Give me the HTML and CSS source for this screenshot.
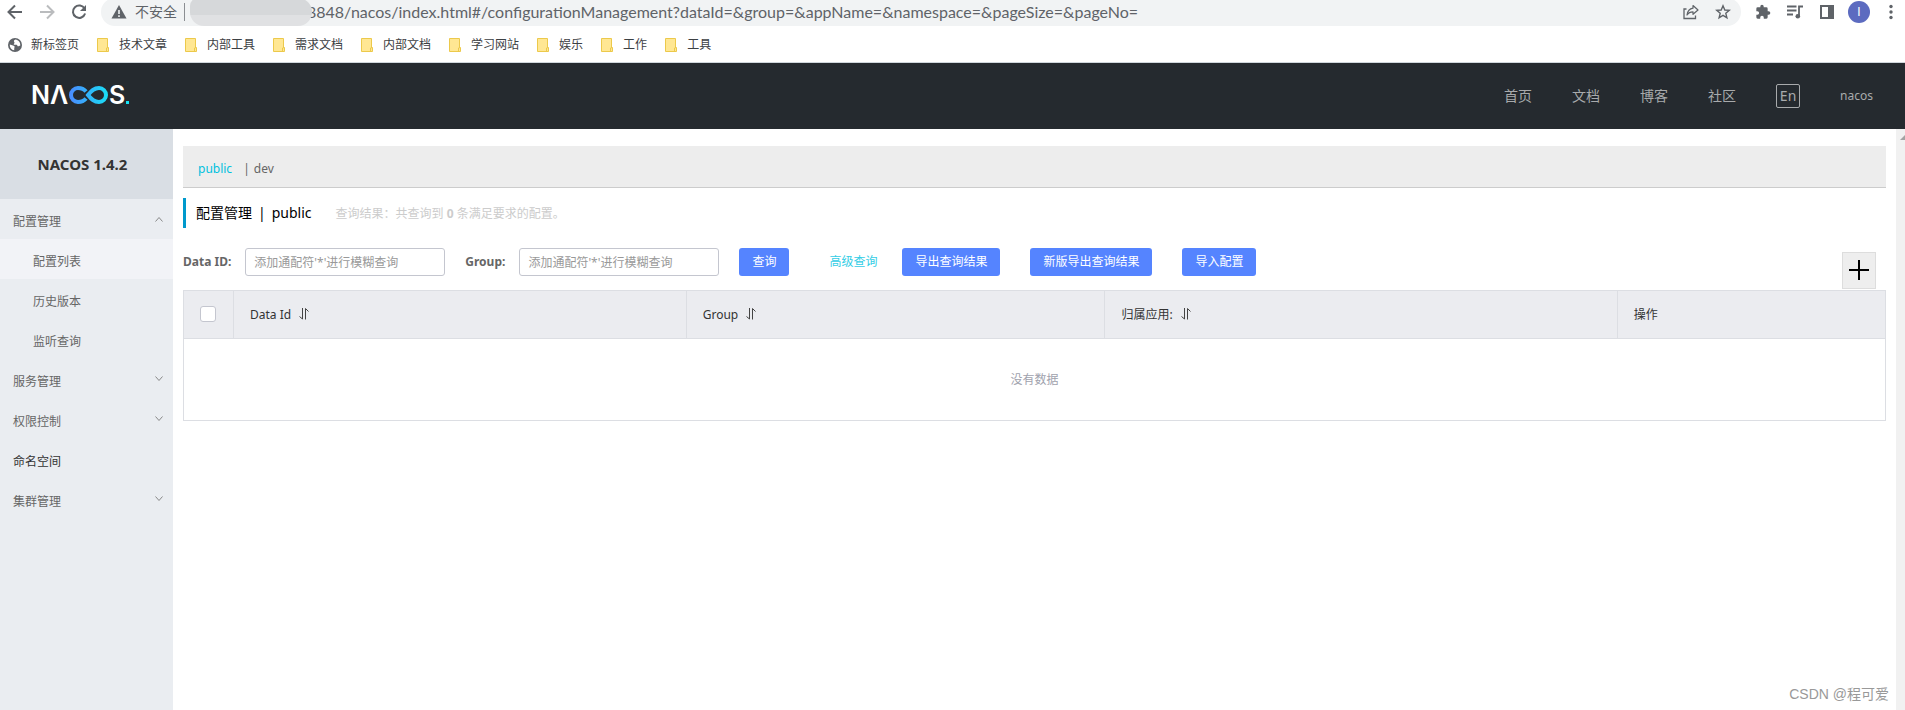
FILE: index.html
```
<!DOCTYPE html>
<html lang="zh-CN">
<head>
<meta charset="utf-8">
<title>Nacos</title>
<link rel="stylesheet" href="styles.css">
</head>
<body>

<!-- browser toolbar -->
<div class="toolbar">
  <div class="toolbar-nav">
    <button class="tool" aria-label="后退"><svg width="16" height="16" viewBox="0 0 16 16"><path d="M15 8H2M8 1.500L1.500 8L8 14.500" fill="none" stroke="#5f6368" stroke-width="2"/></svg></button>
    <button class="tool" aria-label="前进"><svg width="16" height="16" viewBox="0 0 16 16"><path d="M1 8H14M8 1.500L14.500 8L8 14.500" fill="none" stroke="#babcbe" stroke-width="2"/></svg></button>
    <button class="tool" aria-label="刷新"><svg width="16" height="16" viewBox="0 0 16 16"><path d="M13.600 4.700A6.200 6.200 0 1 0 14.100 9.500" fill="none" stroke="#5f6368" stroke-width="2"/><path d="M15 1V7H9z" fill="#5f6368"/></svg></button>
  </div>
  <div class="address">
    <svg width="16" height="14" viewBox="0 0 16 14"><path d="M8 0L15.500 13.500H.500z" fill="#5f6368"/><path d="M8 5V9M8 10.300V12" stroke="#f1f3f4" stroke-width="1.600"/></svg>
    <span class="insecure">不安全</span>
    <span class="smudge"></span>
    <span class="url">8848/nacos/index.html#/configurationManagement?dataId=&amp;group=&amp;appName=&amp;namespace=&amp;pageSize=&amp;pageNo=</span>
    <button class="tool" aria-label="分享"><svg width="16" height="16" viewBox="0 0 16 16"><path d="M3.500 5H1V14.500H12.500V11.500" fill="none" stroke="#5f6368" stroke-width="1.300"/><path d="M10 1.500L15 6L10 10.300V7.800C7.500 7.800 5.500 8.500 4 11C4.500 7.500 6.300 4.800 10 4.200z" fill="none" stroke="#5f6368" stroke-width="1.200" stroke-linejoin="round"/></svg></button>
    <button class="tool" aria-label="收藏"><svg width="16" height="16" viewBox="0 0 16 16"><path d="M8 1.800L9.800 6L14.300 6.300L10.800 9.300L11.900 13.800L8 11.400L4.100 13.800L5.200 9.300L1.700 6.300L6.200 6z" fill="none" stroke="#5f6368" stroke-width="1.400"/></svg></button>
  </div>
  <div class="toolbar-ext">
    <button class="tool" aria-label="扩展程序"><svg width="16" height="16" viewBox="0 0 24 24"><path d="M20.500 11H19V7a2 2 0 0 0-2-2h-4V3.500a2.500 2.500 0 0 0-5 0V5H4a2 2 0 0 0-2 2v3.800h1.500a2.700 2.700 0 0 1 0 5.400H2V20a2 2 0 0 0 2 2h3.800v-1.500a2.700 2.700 0 0 1 5.400 0V22H17a2 2 0 0 0 2-2v-4h1.500a2.500 2.500 0 0 0 0-5z" fill="#5f6368"/></svg></button>
    <button class="tool" aria-label="媒体"><svg width="16" height="16" viewBox="0 0 16 16"><path d="M0 2.500H9.500M0 6.500H9.500M0 10.500H6M12 12.500V2.500H16" fill="none" stroke="#5f6368" stroke-width="1.800"/><circle cx="10.800" cy="12.300" r="2.300" fill="#5f6368"/></svg></button>
    <button class="tool" aria-label="侧边栏"><svg width="16" height="16" viewBox="0 0 16 16"><path d="M1 1H15V15H1zM3 3V13H9V3z" fill="#5f6368" fill-rule="evenodd"/></svg></button>
    <button class="avatar">I</button>
    <button class="tool" aria-label="菜单"><svg width="16" height="16" viewBox="0 0 16 16"><g fill="#5f6368"><circle cx="8" cy="2.500" r="1.700"/><circle cx="8" cy="8" r="1.700"/><circle cx="8" cy="13.500" r="1.700"/></g></svg></button>
  </div>
</div>

<svg class="defs" width="0" height="0">
  <symbol id="folder" viewBox="0 0 12 14"><path d="M.500 .500H10.500V9.500H11.500V13.500H.500z" fill="#ffe793" stroke="#ecc94b"/><path d="M9.500 13.500V10L11 9.500" fill="none" stroke="#ecc94b"/></symbol>
  <symbol id="sort" viewBox="0 0 12 14"><path d="M4.500 1V12L1.500 9.500M7.500 12.500V1.500L10.500 4.500" fill="none" stroke="#444"/></symbol>
  <symbol id="arrow" viewBox="0 0 8 6"><path d="M.500 .500L4 4.500L7.500 .500" fill="none" stroke="#888"/></symbol>
</svg>

<nav class="bookmarks">
  <a class="newtab" href="#"><svg width="14" height="14" viewBox="0 0 14 14"><circle cx="7" cy="7" r="7" fill="#5f6368"/><path d="M7.500 1.600C6 2 5.500 3.300 6.300 4.200C7.300 5 5.500 5.500 5.800 6.700H8.500C9.800 7 9 8.500 10.500 8.300L12.300 7.500C12.500 4.500 10.500 2 7.500 1.600zM1.800 6.500L5 7.500C7 8 6.800 9 6.300 9.800L6.200 12.300C3.500 12 1.600 9.500 1.800 6.500z" fill="#fff"/></svg>新标签页</a>
  <a href="#"><svg width="12" height="14"><use href="#folder"/></svg>技术文章</a>
  <a href="#"><svg width="12" height="14"><use href="#folder"/></svg>内部工具</a>
  <a href="#"><svg width="12" height="14"><use href="#folder"/></svg>需求文档</a>
  <a href="#"><svg width="12" height="14"><use href="#folder"/></svg>内部文档</a>
  <a href="#"><svg width="12" height="14"><use href="#folder"/></svg>学习网站</a>
  <a href="#"><svg width="12" height="14"><use href="#folder"/></svg>娱乐</a>
  <a href="#"><svg width="12" height="14"><use href="#folder"/></svg>工作</a>
  <a href="#"><svg width="12" height="14"><use href="#folder"/></svg>工具</a>
</nav>

<header class="header">
  <a class="logo" href="#" aria-label="NACOS">
    <svg width="106" height="40" viewBox="-4 -10 106 40">
      <defs>
        <linearGradient id="loop" gradientUnits="userSpaceOnUse" x1="37" y1="0" x2="77" y2="0"><stop offset="0" stop-color="#4a8cff"/><stop offset="1" stop-color="#16e3f5"/></linearGradient>
      </defs>
      <g class="logo-text"><text x="-2" y="18">N</text><text x="17" y="18">Λ</text><text x="76" y="18">S</text></g>
      <path d="M53 5.500C51 3 48 2 45 2A7 7 0 0 0 45 16C48 16 51 15 53 12.500M55 9C58.500 4.500 61 2 66 2A7 7 0 0 1 66 16C61 16 58.500 13.500 55 9z" fill="none" stroke="url(#loop)" stroke-width="4"/>
      <rect x="93" y="15" width="3" height="3" fill="#16e3f5"/>
    </svg>
  </a>
  <nav class="header-nav">
    <a href="#">首页</a>
    <a href="#">文档</a>
    <a href="#">博客</a>
    <a href="#">社区</a>
    <button class="lang">En</button>
    <a class="user" href="#">nacos</a>
  </nav>
</header>

<div class="layout">
  <aside class="sidebar">
    <h1 class="version">NACOS 1.4.2</h1>
    <ul class="menu">
      <li><a href="#">配置管理<svg class="up" width="8" height="6"><use href="#arrow"/></svg></a></li>
      <li><a class="sub active" href="#">配置列表</a></li>
      <li><a class="sub" href="#">历史版本</a></li>
      <li><a class="sub" href="#">监听查询</a></li>
      <li><a href="#">服务管理<svg width="8" height="6"><use href="#arrow"/></svg></a></li>
      <li><a href="#">权限控制<svg width="8" height="6"><use href="#arrow"/></svg></a></li>
      <li><a class="single" href="#">命名空间</a></li>
      <li><a href="#">集群管理<svg width="8" height="6"><use href="#arrow"/></svg></a></li>
    </ul>
  </aside>

  <main class="main">
    <div class="namespaces">
      <a class="current" href="#">public</a>
      <span>|</span>
      <a href="#">dev</a>
    </div>

    <div class="heading">
      <h2>配置管理<span class="bar">|</span>public</h2>
      <p>查询结果：共查询到 <strong>0</strong> 条满足要求的配置。</p>
    </div>

    <form class="search">
      <label for="dataId">Data ID:</label>
      <input type="text" id="dataId" placeholder="添加通配符'*'进行模糊查询">
      <label class="next" for="group">Group:</label>
      <input type="text" id="group" placeholder="添加通配符'*'进行模糊查询">
      <button type="button" class="btn query">查询</button>
      <a class="advanced" href="#">高级查询</a>
      <button type="button" class="btn">导出查询结果</button>
      <button type="button" class="btn export">新版导出查询结果</button>
      <button type="button" class="btn">导入配置</button>
      <button type="button" class="add" aria-label="新建配置"><svg width="20" height="20" viewBox="0 0 20 20"><path d="M0 10H20M10 0V20" stroke="#000" stroke-width="2"/></svg></button>
    </form>

    <table class="configs">
      <colgroup><col class="c-check"><col class="c-id"><col class="c-group"><col class="c-app"><col></colgroup>
      <thead>
        <tr>
          <th class="check"><input type="checkbox" aria-label="全选"></th>
          <th>Data Id<svg width="12" height="14"><use href="#sort"/></svg></th>
          <th>Group<svg width="12" height="14"><use href="#sort"/></svg></th>
          <th>归属应用:<svg width="12" height="14"><use href="#sort"/></svg></th>
          <th>操作</th>
        </tr>
      </thead>
      <tbody>
        <tr><td class="empty" colspan="5">没有数据</td></tr>
      </tbody>
    </table>
  </main>

  <div class="scrollbar"><svg width="9" height="5" viewBox="0 0 9 5"><path d="M4 5L9 0V5z" fill="#a3a3a3"/></svg></div>
</div>

<div class="watermark">CSDN @程可爱</div>

</body>
</html>
```
FILE: styles.css
```
* {
	box-sizing: border-box;
}
body {
	margin: 0;
	min-height: 100vh;
	display: flex;
	flex-direction: column;
	position: relative;
	background: #fff;
	color: #333;
	font: 12px/18px "Noto Sans", "Noto Sans CJK SC", sans-serif;
}
a {
	color: inherit;
	text-decoration: none;
}
button {
	margin: 0;
	padding: 0;
	border: 0;
	background: none;
	font: inherit;
	color: inherit;
}
svg {
	display: block;
	flex: none;
}
.defs {
	position: absolute;
}

/* browser toolbar */
.toolbar {
	display: flex;
	height: 26px;
	overflow: hidden;
}
.toolbar-nav {
	display: flex;
	align-items: center;
	gap: 16px;
	width: 101px;
	padding: 0 0 2px 7px;
}
.address {
	flex: 1;
	display: flex;
	align-items: center;
	gap: 16px;
	height: 28px;
	margin-top: -2px;
	padding: 0 10px;
	border-radius: 14px;
	background: #f1f3f4;
	color: #5f6368;
	font-size: 14px;
}
.insecure {
	margin-left: -8px;
	padding-right: 7px;
	border-right: 1px solid #8b8e92;
}
.smudge {
	width: 122px;
	height: 28px;
	margin-left: -11px;
	border-radius: 8px 14px 14px 14px;
	background: linear-gradient(#d6d8da 17px, #e0e1e3 17px);
	z-index: 1;
}
.url {
	flex: 1;
	margin-left: -21px;
	font-family: Lato, sans-serif;
	font-size: 16px;
	white-space: nowrap;
}
.toolbar-ext {
	display: flex;
	align-items: center;
	gap: 16px;
	padding: 0 6px 2px 14px;
}
.avatar {
	width: 22px;
	height: 22px;
	margin: 0 -3px;
	border-radius: 50%;
	background: #5c6bc0;
	color: #fff;
	font-family: Roboto, sans-serif;
	line-height: 22px;
}
.bookmarks {
	display: flex;
	align-items: center;
	gap: 18px;
	height: 37px;
	padding: 1px 0 0 8px;
	border-bottom: 1px solid #d0d7dc;
	color: #3c4043;
}
.bookmarks a {
	display: flex;
	align-items: center;
	gap: 10px;
}
.bookmarks .newtab {
	gap: 9px;
}

/* nacos header */
.header {
	display: flex;
	align-items: center;
	justify-content: space-between;
	height: 66px;
	padding: 0 32px 0 29px;
	background: #252a2f;
	color: #a8aaac;
}
.logo-text {
	fill: #fff;
	font: 600 25px Inter, sans-serif;
}
.header-nav {
	display: flex;
	align-items: center;
	gap: 40px;
	font-size: 14px;
}
.lang {
	width: 24px;
	height: 24px;
	border: 1px solid #a8aaac;
	border-radius: 2px;
	line-height: 20px;
}
.user {
	font-size: 12px;
}

.layout {
	flex: 1;
	display: flex;
}
.sidebar {
	width: 173px;
	background: #eaedf1;
	color: #666;
}
.version {
	margin: 0;
	background: #d9dee4;
	color: #333;
	font-size: 15px;
	line-height: 70px;
	text-align: center;
	text-indent: -8px;
}
.menu {
	margin: 0;
	padding: 0;
	list-style: none;
}
.menu a {
	display: flex;
	align-items: center;
	justify-content: space-between;
	height: 40px;
	padding: 6px 10px 0 13px;
}
.menu svg {
	margin-bottom: 6px;
}
.menu .up {
	transform: rotate(180deg);
}
.menu .sub {
	padding-left: 33px;
}
.menu .active {
	background: #f2f3f7;
}
.menu .single {
	color: #333;
}

.main {
	flex: 1;
	padding: 17px 10px 0;
}
.namespaces {
	display: flex;
	align-items: center;
	gap: 4px;
	height: 42px;
	padding: 4px 15px 0;
	border-bottom: 1px solid #ccc;
	background: #ededed;
	color: #666;
}
.namespaces .current {
	margin-right: 7px;
	color: #00c1de;
}
.heading {
	display: flex;
	align-items: center;
	height: 30px;
	margin: 10px 0 20px;
	padding-left: 10px;
	border-left: 3px solid #09c;
}
.heading h2 {
	margin: 0;
	color: #000;
	font-size: 14px;
	font-weight: normal;
}
.bar {
	margin: 0 6px;
}
.heading p {
	margin: 0 0 0 24px;
	padding-top: 1px;
	color: #ccc;
}

.search {
	display: flex;
	align-items: center;
	height: 28px;
	margin-bottom: 14px;
}
.search label {
	margin-right: 14px;
	color: #666;
	font-weight: bold;
}
.search .next {
	margin-left: 20px;
}
.search input {
	width: 200px;
	height: 28px;
	padding: 0 8px;
	border: 1px solid #c4c6cf;
	border-radius: 3px;
	font: inherit;
}
.search input::placeholder {
	color: #999;
}
.btn {
	height: 28px;
	padding: 0 13px;
	border-radius: 3px;
	background: #5584ff;
	color: #fff;
}
.query {
	margin-left: 20px;
}
.advanced {
	margin: 0 25px 0 40px;
	color: #33cde5;
}
.export {
	margin: 0 30px;
}
.add {
	align-self: flex-start;
	width: 34px;
	height: 37px;
	margin: 4px 10px 0 auto;
	padding: 0 6px 2px;
	border: 1px solid #ddd;
	background: #eee;
}

.configs {
	width: 100%;
	border: 1px solid #dcdee3;
	border-collapse: collapse;
	table-layout: fixed;
}
.c-check {
	width: 50px;
}
.c-id {
	width: 26.6%;
}
.c-group {
	width: 24.6%;
}
.c-app {
	width: 30.1%;
}
.configs th {
	height: 48px;
	padding: 0 16px;
	border: 1px solid #dcdee3;
	background: #ebecf0;
	font-weight: normal;
	text-align: left;
}
.configs th svg {
	display: inline-block;
	margin-left: 7px;
	vertical-align: -2px;
}
.configs input {
	appearance: none;
	display: block;
	width: 16px;
	height: 16px;
	margin: 0 0 2px;
	border: 1px solid #c4c6cf;
	border-radius: 3px;
	background: #fff;
}
.configs .empty {
	height: 82px;
	padding: 0;
	color: #a0a2ad;
	text-align: center;
}

.scrollbar {
	width: 9px;
	padding-top: 6px;
	background: #f1f1f1;
}
.watermark {
	position: absolute;
	right: 16px;
	bottom: 6px;
	color: #999;
	font: 14px/20px "Liberation Sans", "Noto Sans CJK SC", sans-serif;
}
```
